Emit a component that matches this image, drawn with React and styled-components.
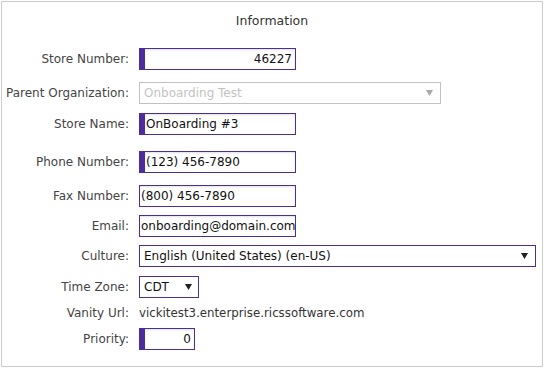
import styled, { createGlobalStyle } from 'styled-components'

const Global = createGlobalStyle`
  html, body {
    margin: 0;
    padding: 0;
    background: #ffffff;
  }
  body {
    font-family: "DejaVu Sans", Verdana, sans-serif;
    font-size: 12px;
    color: #333333;
  }
`

const purple = '#4b2e9c'

const Panel = styled.div`
  box-sizing: border-box;
  margin: 1px;
  width: 542px;
  height: 366px;
  border: 1px solid #cccccc;
  display: flex;
  flex-direction: column;
`

const Title = styled.div`
  margin-top: 11px;
  height: 16px;
  line-height: 16px;
  text-align: center;
  font-size: 12.5px;
  color: #333333;
`

const Row = styled.div`
  display: grid;
  grid-template-columns: 127px auto;
  column-gap: 10px;
  align-items: center;
  height: 22px;
  margin-top: ${p => p.$mt}px;
`

const Label = styled.label`
  text-align: right;
  color: #444444;
  white-space: nowrap;
`

const TextInput = styled.input`
  box-sizing: border-box;
  width: ${p => p.$w}px;
  height: 22px;
  margin: 0;
  border: 1px solid ${purple};
  border-left: ${p => (p.$required ? 6 : 1)}px solid ${purple};
  border-radius: 0;
  padding: 0 ${p => (p.$right ? 3 : 0)}px 0 1px;
  text-align: ${p => (p.$right ? 'right' : 'left')};
  font-family: "DejaVu Sans", Verdana, sans-serif;
  font-size: 12px;
  color: #111111;
  background: #ffffff;
  box-shadow: inset 0 1px 2px rgba(0, 0, 0, 0.12);
  outline: none;
`

const SelectWrap = styled.div`
  position: relative;
  width: ${p => p.$w}px;
  height: 22px;
`

const Select = styled.select`
  box-sizing: border-box;
  width: 100%;
  height: 22px;
  margin: 0;
  appearance: none;
  -webkit-appearance: none;
  border: 1px solid ${p => (p.$disabled ? '#a9a9a9' : purple)};
  border-radius: 0;
  padding: 0 0 0 4px;
  font-family: "DejaVu Sans", Verdana, sans-serif;
  font-size: 12px;
  color: ${p => (p.$disabled ? '#aaaaaa' : '#111111')};
  background: #ffffff;
  outline: none;
`

const Arrow = styled.svg`
  position: absolute;
  right: ${p => p.$r}px;
  top: 8px;
  width: 7px;
  height: 6px;
  pointer-events: none;
`

const Value = styled.span`
  color: #333333;
  white-space: nowrap;
  font-size: 11.8px;
`

const Caret = ({ color, r }) => (
  <Arrow $r={r} viewBox="0 0 7 6">
    <polygon points="0,0 7,0 3.5,6" fill={color} />
  </Arrow>
)

const Dropdown = ({ w, value, disabled, r = 8 }) => (
  <SelectWrap $w={w}>
    <Select $disabled={disabled} defaultValue={value} disabled={disabled}>
      <option>{value}</option>
    </Select>
    <Caret color={disabled ? '#a8a8a8' : '#222222'} r={r} />
  </SelectWrap>
)

export default function App() {
  return (
    <>
      <Global />
      <Panel>
        <Title>Information</Title>
        <Row $mt={19}>
          <Label>Store Number:</Label>
          <TextInput $w={157} $required $right defaultValue="46227" />
        </Row>
        <Row $mt={12}>
          <Label>Parent Organization:</Label>
          <Dropdown w={302} value="Onboarding Test" disabled />
        </Row>
        <Row $mt={9}>
          <Label>Store Name:</Label>
          <TextInput $w={157} $required defaultValue="OnBoarding #3" />
        </Row>
        <Row $mt={16}>
          <Label>Phone Number:</Label>
          <TextInput $w={157} $required defaultValue="(123) 456-7890" />
        </Row>
        <Row $mt={12}>
          <Label>Fax Number:</Label>
          <TextInput $w={157} defaultValue="(800) 456-7890" />
        </Row>
        <Row $mt={8}>
          <Label>Email:</Label>
          <TextInput $w={157} defaultValue="onboarding@domain.com" />
        </Row>
        <Row $mt={8}>
          <Label>Culture:</Label>
          <Dropdown w={397} value="English (United States) (en-US)" />
        </Row>
        <Row $mt={9}>
          <Label>Time Zone:</Label>
          <Dropdown w={60} value="CDT" r={7} />
        </Row>
        <Row $mt={4}>
          <Label>Vanity Url:</Label>
          <Value>vickitest3.enterprise.ricssoftware.com</Value>
        </Row>
        <Row $mt={4}>
          <Label>Priority:</Label>
          <TextInput $w={56} $required $right defaultValue="0" />
        </Row>
      </Panel>
    </>
  )
}
